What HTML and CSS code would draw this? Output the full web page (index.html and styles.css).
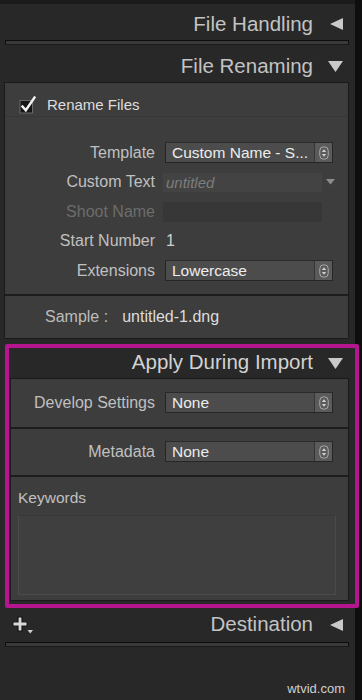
FILE: index.html
```html
<!DOCTYPE html>
<html>
<head>
<meta charset="utf-8">
<link rel="stylesheet" href="styles.css">
</head>
<body>
<div class="app">
  <div class="col">
    <div class="hdr hdr-first">
      <span class="hdr-title">File Handling</span>
      <svg class="tri" width="16" height="14" viewBox="0 0 16 14"><polygon points="3,7 16,1 16,13" /></svg>
    </div>
    <div class="groove"></div>

    <div class="hdr hdr-rename">
      <span class="hdr-title">File Renaming</span>
      <svg class="tri" width="16" height="14" viewBox="0 0 16 14"><polygon points="1,2 16,2 8.5,13" /></svg>
    </div>
    <div class="panel">
      <div class="check-row">
        <svg class="checkbox" width="18" height="18" viewBox="0 0 18 18">
          <rect x="1" y="4.5" width="12.5" height="12.5" fill="#161616" stroke="#6a6a6a" stroke-width="1"/>
          <path d="M3.5 10.5 L6.8 14.2 L15.5 1.5" fill="none" stroke="#f2f2f2" stroke-width="2.4" stroke-linecap="square"/>
        </svg>
        <span class="check-label">Rename Files</span>
      </div>
      <div class="opts">
        <div class="row">
          <span class="lbl">Template</span>
          <div class="sel"><span>Custom Name - S...</span><span class="step"><svg width="10" height="14" viewBox="0 0 10 14"><rect x="0.75" y="0.75" width="8.5" height="12.5" rx="4" fill="none" stroke="#a8a8a8" stroke-width="1"/><polygon points="2.8,6 7.2,6 5,3.3" fill="#cfcfcf"/><polygon points="2.8,8 7.2,8 5,10.7" fill="#cfcfcf"/></svg></span></div>
        </div>
        <div class="row">
          <span class="lbl">Custom Text</span>
          <div class="field-wrap"><div class="field field-custom">untitled</div><svg class="mini-tri" width="9" height="6" viewBox="0 0 9 6"><polygon points="0,0 9,0 4.5,5.5"/></svg></div>
        </div>
        <div class="row">
          <span class="lbl lbl-dim">Shoot Name</span>
          <div class="field-wrap"><div class="field field-shoot"></div></div>
        </div>
        <div class="row">
          <span class="lbl">Start Number</span>
          <span class="val">1</span>
        </div>
        <div class="row">
          <span class="lbl">Extensions</span>
          <div class="sel"><span>Lowercase</span><span class="step"><svg width="10" height="14" viewBox="0 0 10 14"><rect x="0.75" y="0.75" width="8.5" height="12.5" rx="4" fill="none" stroke="#a8a8a8" stroke-width="1"/><polygon points="2.8,6 7.2,6 5,3.3" fill="#cfcfcf"/><polygon points="2.8,8 7.2,8 5,10.7" fill="#cfcfcf"/></svg></span></div>
        </div>
      </div>
      <div class="sample">
        <span class="sample-lbl">Sample :</span>
        <span class="sample-val">untitled-1.dng</span>
      </div>
    </div>

    <div class="hdr hdr-apply">
      <span class="hdr-title hdr-bright">Apply During Import</span>
      <svg class="tri" width="16" height="14" viewBox="0 0 16 14"><polygon points="1,2 16,2 8.5,13" /></svg>
    </div>
    <div class="panel panel-apply">
      <div class="row row-tall">
        <span class="lbl">Develop Settings</span>
        <div class="sel"><span>None</span><span class="step"><svg width="10" height="14" viewBox="0 0 10 14"><rect x="0.75" y="0.75" width="8.5" height="12.5" rx="4" fill="none" stroke="#a8a8a8" stroke-width="1"/><polygon points="2.8,6 7.2,6 5,3.3" fill="#cfcfcf"/><polygon points="2.8,8 7.2,8 5,10.7" fill="#cfcfcf"/></svg></span></div>
      </div>
      <div class="row row-tall row-div">
        <span class="lbl">Metadata</span>
        <div class="sel"><span>None</span><span class="step"><svg width="10" height="14" viewBox="0 0 10 14"><rect x="0.75" y="0.75" width="8.5" height="12.5" rx="4" fill="none" stroke="#a8a8a8" stroke-width="1"/><polygon points="2.8,6 7.2,6 5,3.3" fill="#cfcfcf"/><polygon points="2.8,8 7.2,8 5,10.7" fill="#cfcfcf"/></svg></span></div>
      </div>
      <div class="keywords">
        <div class="kw-lbl">Keywords</div>
        <div class="kw-box"></div>
      </div>
    </div>

    <div class="hdr hdr-dest">
      <svg class="plus" width="22" height="20" viewBox="0 0 22 20">
        <path d="M8 1.5 V16.5 M0.5 9 H15.5" stroke="#161616" stroke-width="5.2" fill="none"/>
        <path d="M8 2.5 V15.5 M1.5 9 H14.5" stroke="#d8d8d8" stroke-width="2.8" fill="none"/>
        <polygon points="15.5,15 21,15 18.25,18.5" fill="#d0d0d0"/>
      </svg>
      <span class="hdr-title">Destination</span>
      <svg class="tri" width="16" height="14" viewBox="0 0 16 14"><polygon points="3,7 16,1 16,13" /></svg>
    </div>
    <div class="groove groove-dest"></div>

    <div class="annot"></div>
    <div class="watermark">wtvid.com</div>
  </div>
  <div class="strip"></div>
</div>
</body>
</html>
```

FILE: styles.css
```css
* { box-sizing: border-box; }

body {
  margin: 0;
  background: #0f0f0f;
  font-family: "Liberation Sans", Arial, sans-serif;
}

.app {
  display: flex;
  height: 700px;
  overflow: hidden;
}

.col {
  position: relative;
  width: 355px;
  height: 700px;
  background: #282828;
  border-top: 4px solid #1b1b1b;
}

.strip {
  flex: 1;
  background: #0e0e0e;
}

/* section headers */
.hdr {
  display: flex;
  align-items: center;
  justify-content: flex-end;
  gap: 14px;
  padding-right: 12px;
  color: #c3c3c3;
  font-size: 20.5px;
}

.hdr-title { line-height: 1; }
.hdr-bright { color: #d2d2d2; }

.tri { fill: #c9c9c9; flex: none; }

.hdr-first { height: 36px; padding-top: 4px; }
.hdr-rename { height: 37px; padding-top: 5px; }
.hdr-apply { height: 33px; padding-top: 3px; margin-top: 6px; }
.hdr-dest { height: 41px; padding-top: 7px; padding-left: 12px; }
.hdr-dest .plus { margin-right: auto; }

.groove {
  height: 5px;
  margin: 0 6px 0 5px;
  border: 1px solid #0d0d0d;
  border-bottom-color: #1a1a1a;
  background: #3a3a3a;
}

/* panels */
.panel {
  margin: 0 6px 0 4px;
  background: #3d3d3d;
  border: 1px solid #1a1a1a;
}

.check-row {
  display: flex;
  align-items: center;
  height: 34px;
  padding-left: 14px;
  padding-top: 10px;
  gap: 10px;
  border-bottom: 1px solid #373737;
}

.check-label {
  color: #dedede;
  font-size: 15px;
}

.opts {
  padding: 21px 0 8px;
  border-bottom: 2px solid #1d1d1d;
}

.row {
  display: grid;
  grid-template-columns: 150px 1fr;
  column-gap: 10px;
  align-items: center;
  height: 29.5px;
}

.lbl {
  text-align: right;
  color: #c0c0c0;
  font-size: 16px;
  white-space: nowrap;
}

.lbl-dim { color: #6c6c6c; }

.val {
  color: #cfcfcf;
  font-size: 16px;
  padding-left: 1px;
}

.sel {
  display: flex;
  align-items: center;
  justify-content: space-between;
  width: 168px;
  height: 21px;
  padding-left: 6px;
  background: #4c4c4c;
  border: 1px solid #262626;
  border-top-color: #2a2a2a;
  color: #ececec;
  font-size: 15.5px;
  white-space: nowrap;
  overflow: hidden;
}

.step {
  display: flex;
  align-items: center;
  justify-content: center;
  width: 18px;
  height: 19px;
  background: #5b5b5b;
  border-left: 1px solid #353535;
}

.field-wrap {
  display: flex;
  align-items: center;
  margin-left: -2px;
  gap: 3px;
}

.field {
  width: 159px;
  height: 19px;
  padding-left: 3px;
  font-size: 15px;
  line-height: 19px;
}

.field-custom {
  background: #434343;
  color: #7d7d7d;
  font-style: italic;
}

.field-shoot {
  height: 20px;
  background: #373737;
}

.mini-tri { fill: #8c8c8c; margin-left: 1px; }

.sample {
  display: flex;
  align-items: center;
  height: 42px;
  padding-left: 40px;
  gap: 14px;
  font-size: 16px;
}

.sample-lbl { color: #bcbcbc; }
.sample-val { color: #dcdcdc; }

/* apply during import panel */
.panel-apply {
  margin-left: 10px;
  margin-right: 6px;
}

.panel-apply .row {
  grid-template-columns: 144px 1fr;
}

.row-tall { height: 48px; }

.row-div {
  height: 50px;
  border-top: 2px solid #1d1d1d;
  border-bottom: 2px solid #1d1d1d;
}

.keywords {
  height: 123px;
  padding: 12px 12px 0 7px;
}

.kw-lbl {
  color: #c0c0c0;
  font-size: 15.5px;
}

.kw-box {
  margin-top: 8px;
  height: 80px;
  background: #3f3f3f;
  border: 1px solid #4a4a4a;
  border-top-color: #383838;
}

.plus { flex: none; }

/* annotation overlay */
.annot {
  position: absolute;
  left: 5px;
  top: 340px;
  width: 354px;
  height: 264px;
  border: 4px solid #b5168f;
  border-radius: 2px;
  z-index: 2;
  pointer-events: none;
}

.watermark {
  position: absolute;
  right: 10px;
  bottom: 4px;
  color: #cfcfcf;
  font-size: 13px;
  font-family: "Liberation Sans", Arial, sans-serif;
  z-index: 3;
}
```
